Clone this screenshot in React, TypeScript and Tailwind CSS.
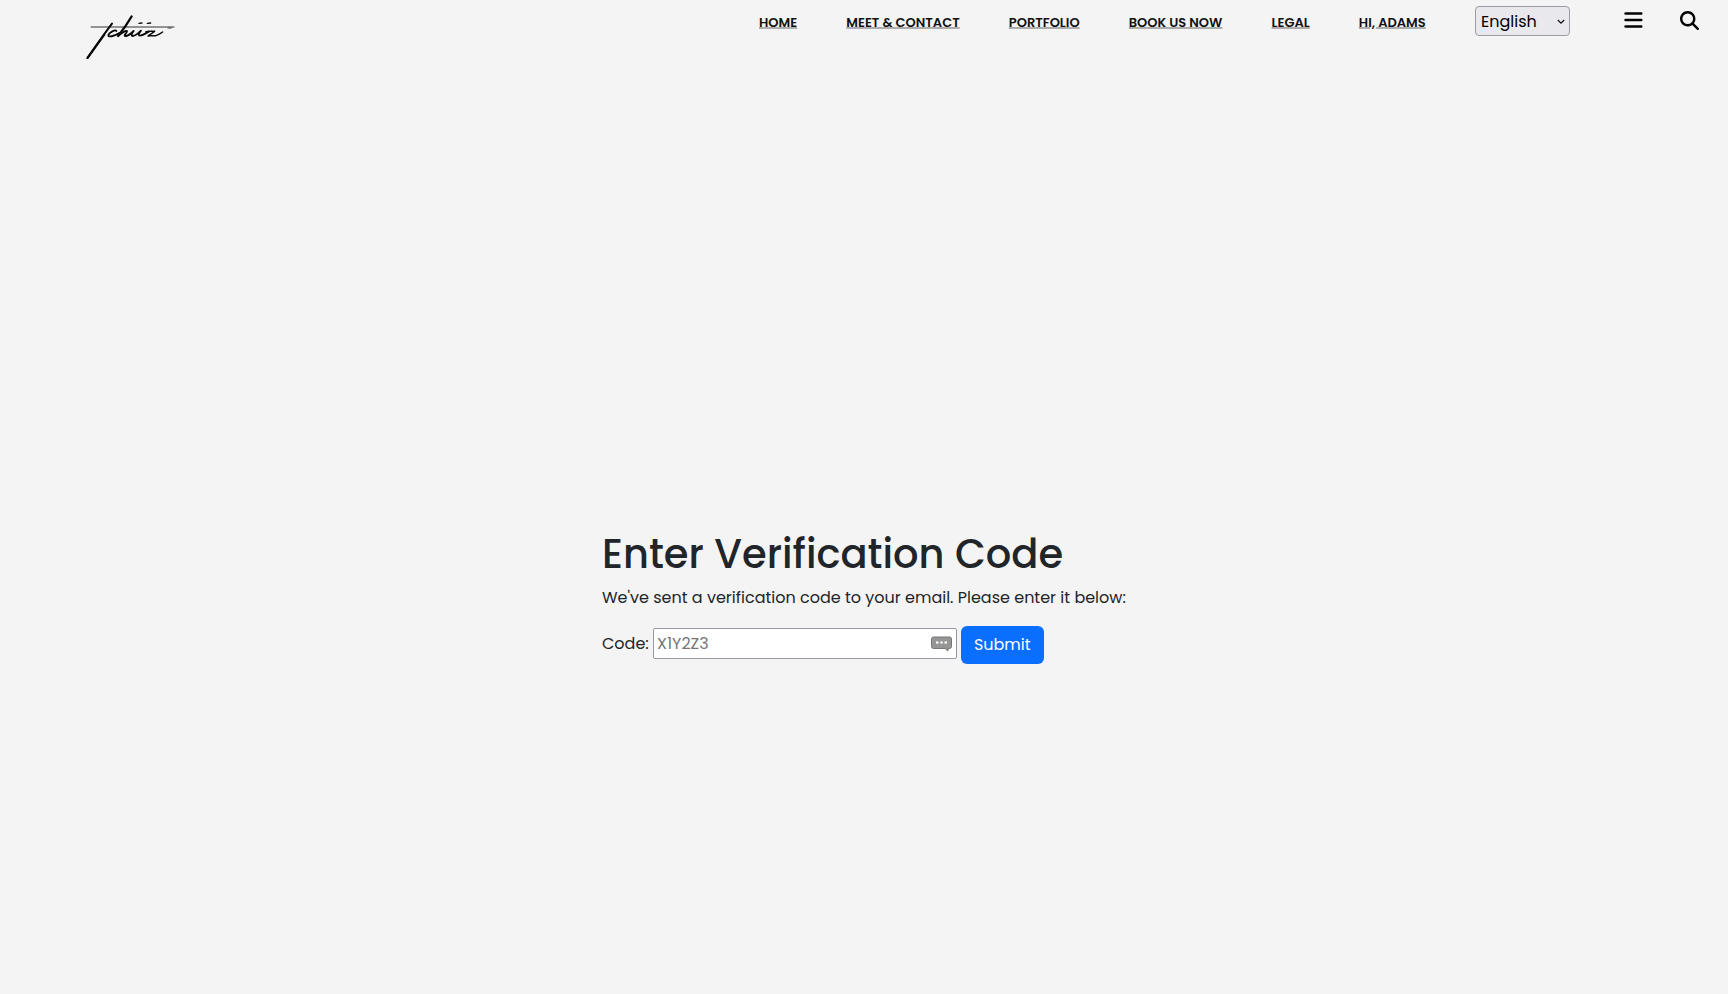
import { useState } from "react";

const links = ["HOME", "MEET & CONTACT", "PORTFOLIO", "BOOK US NOW", "LEGAL", "HI, ADAMS"];

function Logo() {
  return (
    <svg className="ml-[70px] h-[70px] w-[120px] shrink-0" viewBox="0 0 360 210" fill="none" stroke="#090909" strokeLinecap="round" strokeLinejoin="round" aria-label="Tchiiz">
      <path d="M63 81H312" stroke="#333" strokeWidth="3" />
      <path d="M126 71C101 104 78 138 52 174" strokeWidth="6" />
      <path d="M103 104L53 174" strokeWidth="6" />
      <path d="M139 93C136 88 118 97 115 105C114 113 132 109 148 99" strokeWidth="5.5" />
      <path d="M185 49C174 68 158 91 144 108" strokeWidth="6.5" />
      <path d="M146 107C156 98 168 91 171 93C173 97 159 107 166 108C174 108 185 99 191 93C187 98 181 107 188 108C197 107 207 98 213 92C208 98 203 106 210 107C219 107 226 100 236 95" strokeWidth="5.5" />
      <path d="M228 95C237 92 246 94 254 94C250 98 241 102 234 108C243 105 251 110 260 106C268 103 274 99 278 96" strokeWidth="4.5" />
      <path d="M207 70L216 69M232 70L242 69" strokeWidth="4" />
      <path d="M294 84H304" stroke="#444" strokeWidth="3" />
    </svg>
  );
}

function Header() {
  return (
    <header className="flex h-[70px] items-start pr-[29px]">
      <Logo />
      <nav className="ml-[569px] flex gap-[49.15px] pt-[13px]">
        {links.map((label) => (
          <a key={label} href="#" className="text-[13px] leading-[19px] font-semibold whitespace-nowrap text-[#111] underline decoration-[#adadad] decoration-2 underline-offset-0">
            {label}
          </a>
        ))}
      </nav>
      <button className="mt-[6px] mr-[54px] ml-auto flex h-[30px] w-[95px] shrink-0 items-center justify-between rounded-[4px] border border-[#9c9ca6] bg-[#e9e9ed] pt-px pr-1 pl-[5px] text-base text-black">
        <span>English</span>
        <svg className="size-2" viewBox="0 0 8 8" fill="none" stroke="#111" strokeWidth="1.2">
          <path d="M0.8 2L4 5.2L7.2 2" />
        </svg>
      </button>
      <button aria-label="Menu" className="mt-[11px]">
        <svg className="h-[18px] w-[19px]" viewBox="0 0 19 18" stroke="#000" strokeWidth="2.4" strokeLinecap="round">
          <path d="M1.5 2.5H17.3M1.5 9H17.3M1.5 15.5H17.3" />
        </svg>
      </button>
      <button aria-label="Search" className="mt-[11px] ml-[37px]">
        <svg className="size-[19px]" viewBox="0 0 512 512">
          <path d="M416 208c0 45.900-14.900 88.300-40 122.700L502.600 457.400c12.500 12.500 12.500 32.800 0 45.300s-32.800 12.500-45.300 0L330.700 376c-34.400 25.200-76.800 40-122.700 40C93.100 416 0 322.900 0 208S93.100 0 208 0S416 93.100 416 208zM208 352a144 144 0 1 0 0-288 144 144 0 1 0 0 288z" />
        </svg>
      </button>
    </header>
  );
}

export default function App() {
  const [code, setCode] = useState("");
  return (
    <div className="h-screen w-full overflow-hidden bg-[#f4f4f4] font-['Poppins',sans-serif] text-[#212529]">
      <Header />
      <main className="ml-[602px] w-[524px] pt-[460px]">
        <h1 className="h-12 text-[40px] leading-12 font-medium whitespace-nowrap">Enter Verification Code</h1>
        <p className="mt-2 h-6 text-base leading-6 whitespace-nowrap">We've sent a verification code to your email. Please enter it below:</p>
        <form className="mt-4 flex h-[38px] items-center" onSubmit={(e) => e.preventDefault()}>
          <label htmlFor="code" className="-mt-[2px] w-[51px] text-base whitespace-nowrap">Code:</label>
          <div className="-mt-[3px] flex h-[31px] w-[304px] items-center rounded-[2px] border border-[#9898a4] bg-white pr-1 pl-[3px]">
            <input id="code" value={code} onChange={(e) => setCode(e.target.value)} placeholder="X1Y2Z3" className="min-w-0 flex-1 bg-transparent text-base outline-none placeholder:text-[#757575]" />
            <svg className="mt-px h-4 w-[21px]" viewBox="0 0 21 16">
              <path d="M2.5 1H18.5Q20.500 1 20.500 3V10.500Q20.500 12.500 18.500 12.500H17V15L14 12.500H2.500Q.5 12.500 .5 10.500V3Q.5 1 2.500 1Z" fill="#969696" stroke="#777" />
              <path d="M5 5.500H7.500V7.500H5zM9.300 5.500H11.800V7.500H9.300zM13.500 5.500H16V7.500H13.500z" fill="#fff" />
            </svg>
          </div>
          <button className="ml-1 h-[38px] w-[82.5px] rounded-md bg-[#0a6eff] text-base text-white">Submit</button>
        </form>
      </main>
    </div>
  );
}
